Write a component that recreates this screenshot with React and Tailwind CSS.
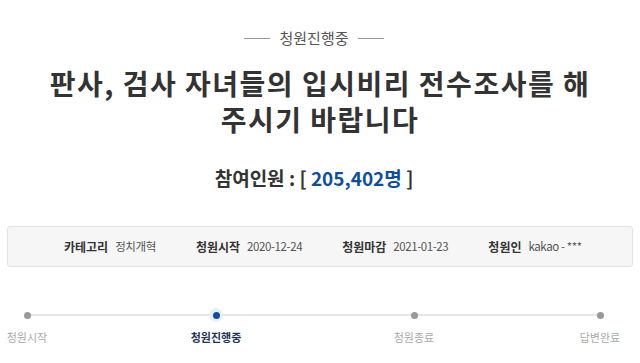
import React from 'react';

const steps = [
  { label: '청원시작', w: 'w-[54px]', ml: 'ml-0', active: false },
  { label: '청원진행중', w: 'w-[60px]', ml: 'ml-[132px]', active: true },
  { label: '청원종료', w: 'w-[54px]', ml: 'ml-[141px]', active: false },
  { label: '답변완료', w: 'w-[54px]', ml: 'ml-[132px]', active: false },
];

const info = [
  { label: '카테고리', value: '정치개혁' },
  { label: '청원시작', value: '2020-12-24' },
  { label: '청원마감', value: '2021-01-23' },
  { label: '청원인', value: 'kakao - ***' },
];

export default function App() {
  return (
    <div className="w-[640px] h-[363px] overflow-hidden bg-white font-['Noto_Sans_CJK_KR','Noto_Sans',sans-serif] text-[#333]">
      {/* Status badge */}
      <div className="flex items-center justify-center gap-[9px] pt-[27px] pr-[12px]">
        <span className="w-[26px] h-px bg-[#999]" />
        <span className="text-[15px] leading-[22px] text-[#555]">청원진행중</span>
        <span className="w-[26px] h-px bg-[#999]" />
      </div>

      {/* Title */}
      <h1 className="mt-[16px] text-center text-[28px] leading-[36px] font-bold tracking-[1.5px] text-[#333]">
        판사, 검사 자녀들의 입시비리 전수조사를 해<br />주시기 바랍니다
      </h1>

      {/* Participants */}
      <div className="mt-[28px] pr-[12px] text-center text-[19px] leading-[26px] font-bold">
        참여인원 : [ <span className="text-[#0b4ea2]">205,402명</span> ]
      </div>

      {/* Info box */}
      <div className="mx-[7px] mt-[35px] h-[41px] rounded-[3px] border border-[#e3e3e3] bg-[#f6f6f6] flex items-center">
        <div className="flex items-center pl-[56px]">
          {info.map((it, i) => (
            <div key={it.label} className={`flex items-center gap-[7px] ${i === 0 ? '' : 'ml-[40px]'}`}>
              <span className="text-[12px] font-bold text-[#333]">{it.label}</span>
              <span className="text-[11.5px] tracking-[-0.4px] text-[#555]">{it.value}</span>
            </div>
          ))}
        </div>
      </div>

      {/* Progress */}
      <div className="relative mt-[41px]">
        <div className="absolute left-[27px] right-[40px] top-[6px] h-[2px] bg-[#e6e6e6]" />
        <div className="relative flex">
          {steps.map((s) => (
            <div key={s.label} className={`${s.w} ${s.ml} flex flex-col items-center`}>
              <div className="h-[14px] flex items-center justify-center">
                {s.active ? (
                  <span className="w-[14px] h-[14px] rounded-full bg-[#e8f0fb] flex items-center justify-center">
                    <span className="w-[7px] h-[7px] rounded-full bg-[#0b4ea2]" />
                  </span>
                ) : (
                  <span className="w-[7px] h-[7px] rounded-full bg-[#999]" />
                )}
              </div>
              <span className={`mt-[6px] text-[11px] leading-[18px] whitespace-nowrap ${s.active ? 'font-bold text-[#1d3557]' : 'text-[#aaa]'}`}>
                {s.label}
              </span>
            </div>
          ))}
        </div>
      </div>
    </div>
  );
}
